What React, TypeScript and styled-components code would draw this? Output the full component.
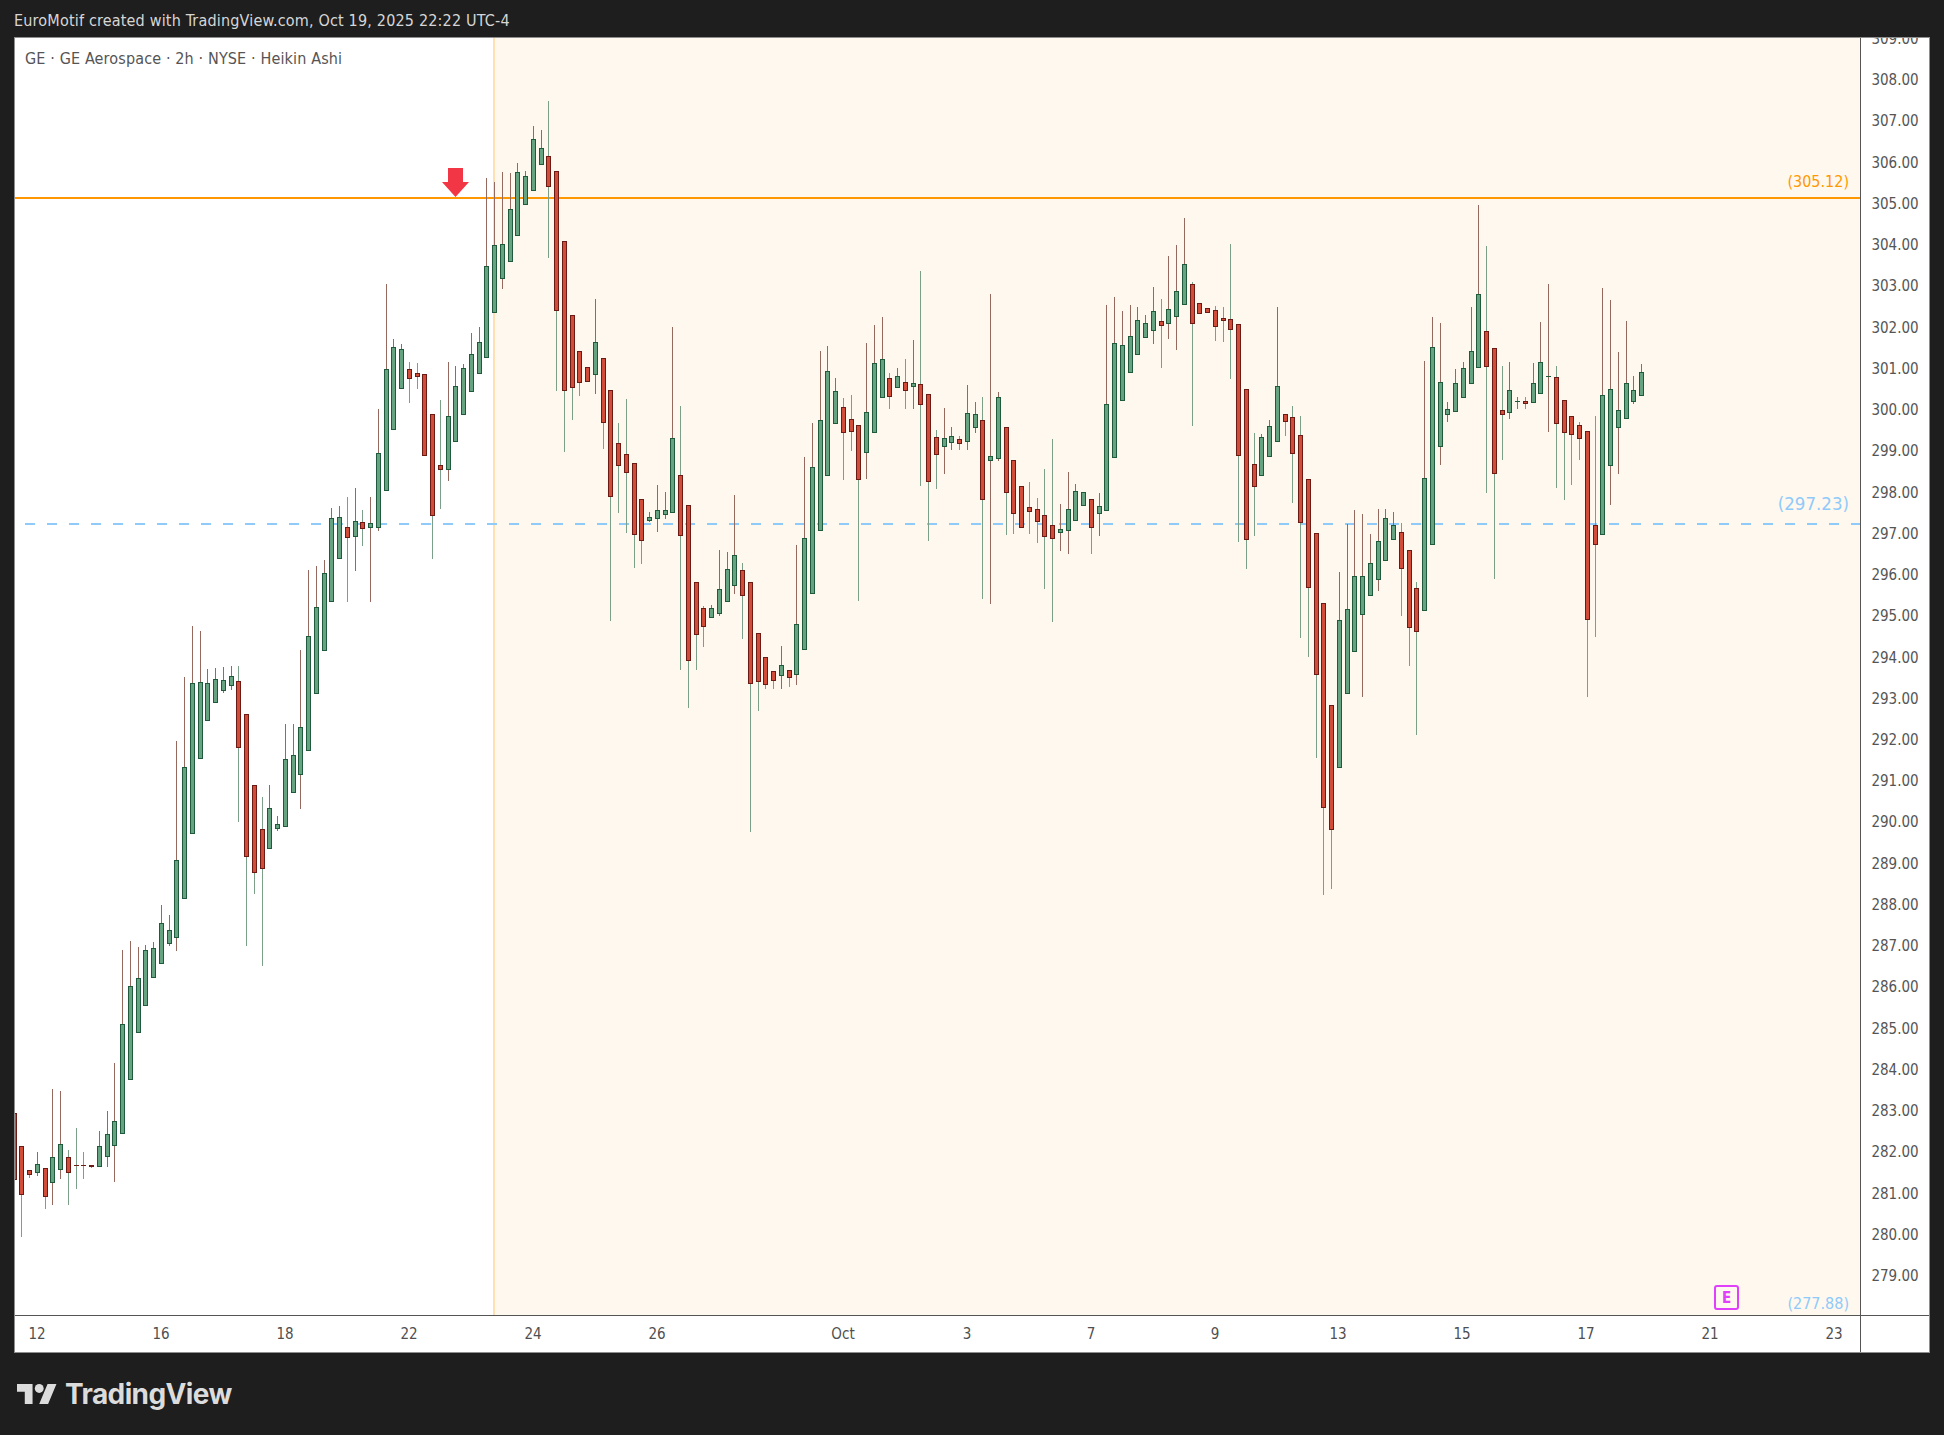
import styled, { createGlobalStyle } from "styled-components";

const GlobalStyle = createGlobalStyle`
  html, body {
    margin: 0;
    padding: 0;
    background: #1e1e1e;
  }
`;

const Page = styled.div`
  width: 1944px;
  height: 1435px;
  overflow: hidden;
  background: #1e1e1e;
  font-family: "DejaVu Sans Condensed", "DejaVu Sans", "Noto Sans", sans-serif;
  font-stretch: condensed;
`;

const Header = styled.div`
  height: 34px;
  padding: 3px 0 0 14px;
  display: flex;
  align-items: center;
  color: #d6d6d6;
  font-size: 16px;
  letter-spacing: 0.18px;
  white-space: nowrap;
`;

const Frame = styled.div`
  margin-left: 14px;
  width: 1916px;
  height: 1316px;
  box-sizing: border-box;
  border: 1px solid #8e8e8e;
  background: #fff;
  display: grid;
  grid-template-columns: 1845px 69px;
  grid-template-rows: 1277px 37px;
`;

const Plot = styled.div`
  position: relative;
  overflow: hidden;
`;

const ChartSvg = styled.svg`
  display: block;
`;

const Legend = styled.div`
  position: absolute;
  left: 10px;
  top: 11px;
  color: #555;
  font-size: 16px;
  letter-spacing: 0.14px;
  line-height: 20px;
  white-space: nowrap;
`;

const LevelLabel = styled.div<{ $color: string; $top: number; $size: number }>`
  position: absolute;
  right: 11px;
  top: ${(p) => p.$top}px;
  color: ${(p) => p.$color};
  font-size: ${(p) => p.$size}px;
  line-height: 20px;
  white-space: nowrap;
`;

const EarningsBadge = styled.div`
  position: absolute;
  left: 1699px;
  top: 1247px;
  width: 25px;
  height: 25px;
  box-sizing: border-box;
  border: 2px solid #e040fb;
  border-radius: 3px;
  color: #e040fb;
  font-size: 15px;
  font-weight: 700;
  display: flex;
  align-items: center;
  justify-content: center;
`;

const PriceAxis = styled.div`
  border-left: 1px solid #555;
  overflow: hidden;
  color: #555;
  font-size: 15px;
`;

const PriceList = styled.div`
  margin-top: -19px;
  display: flex;
  flex-direction: column;
  align-items: center;
`;

const PriceTick = styled.div`
  height: 41.24px;
  line-height: 41.24px;
`;

const TimeAxis = styled.div`
  border-top: 1px solid #555;
  display: flex;
  align-items: center;
  padding-left: 22px;
  color: #4f4f4f;
  font-size: 15px;
`;

const TimeTick = styled.div<{ $width: number }>`
  flex: none;
  width: ${(p) => p.$width}px;
`;

const TimeLabel = styled.span`
  display: inline-block;
  white-space: nowrap;
  transform: translateX(-50%);
`;

const Corner = styled.div`
  border-top: 1px solid #555;
  border-left: 1px solid #555;
`;

const Footer = styled.div`
  padding: 29px 0 0 17px;
  display: flex;
  align-items: center;
  gap: 8px;
  color: #dcdcdc;
`;

const LogoMark = styled.svg`
  display: block;
  flex: none;
`;

const LogoWord = styled.div`
  font-family: Inter, "Liberation Sans", sans-serif;
  font-stretch: normal;
  font-size: 28px;
  font-weight: 700;
  line-height: 24px;
  letter-spacing: -0.6px;
`;

// [green, wick top, body top, body bottom, wick bottom], page pixels
type Candle = [number, number, number, number, number];

const candles: Candle[] = [
  [0,1113,1113,1179,1250],[0,1146,1146,1194,1236],[0,1170,1170,1174,1177],[1,1152,1164,1172,1175],
  [0,1168,1168,1196,1208],[1,1089,1157,1182,1204],[1,1091,1144,1169,1178],[0,1150,1157,1172,1204],
  [0,1128,1165,1165,1188],[0,1152,1165,1165,1178],[0,1165,1165,1166,1167],[1,1131,1146,1166,1166],
  [1,1111,1134,1156,1166],[1,1063,1121,1145,1181],[1,950,1024,1133,1133],[1,941,986,1079,1079],
  [1,947,978,1032,1032],[1,945,950,1005,1005],[1,942,948,977,977],[1,905,923,963,963],
  [1,915,930,943,945],[1,741,860,937,950],[1,677,767,898,898],[1,626,683,833,833],
  [1,631,682,758,758],[1,669,683,720,720],[1,668,679,702,702],[1,667,680,690,692],
  [1,666,676,685,689],[0,666,681,747,821],[0,714,714,856,945],[0,785,785,872,893],
  [0,797,829,868,965],[1,785,808,848,848],[1,816,824,828,830],[1,724,759,826,826],
  [1,724,755,792,792],[1,650,727,774,808],[1,570,636,750,750],[1,566,607,693,693],
  [1,560,573,650,650],[1,508,518,601,601],[1,506,517,558,558],[0,497,527,537,601],
  [1,488,521,536,570],[0,510,522,528,545],[1,497,523,527,601],[1,409,453,527,530],
  [1,284,369,490,490],[1,339,347,429,429],[1,344,349,388,388],[0,362,369,378,402],
  [0,363,373,376,388],[0,374,374,455,455],[0,414,414,515,558],[0,400,465,469,508],
  [1,362,416,469,480],[1,366,386,441,441],[1,364,368,414,414],[1,333,354,391,391],
  [1,327,342,373,373],[1,178,266,357,357],[1,182,245,312,312],[1,172,244,278,288],
  [1,173,209,261,261],[1,163,172,235,235],[1,171,176,204,204],[1,126,139,190,190],
  [1,130,148,164,164],[0,101,156,186,257],[0,171,171,310,390],[0,241,241,390,451],
  [0,315,315,387,419],[0,351,351,382,395],[0,367,367,381,381],[1,299,342,374,393],
  [0,358,358,422,448],[0,390,390,496,620],[0,423,443,465,512],[0,399,454,472,532],
  [0,463,463,534,567],[0,499,499,540,563],[1,512,517,520,521],[1,485,510,518,531],
  [1,492,510,514,518],[1,327,438,512,512],[0,406,475,535,669],[0,505,505,660,707],
  [0,582,582,634,669],[0,606,608,626,646],[1,605,608,617,617],[1,550,589,613,615],
  [1,552,569,601,601],[1,495,555,585,593],[0,563,570,595,638],[0,582,582,683,831],
  [0,633,633,681,710],[0,657,657,684,688],[0,671,671,680,688],[1,646,665,675,688],
  [0,670,670,677,686],[1,545,624,674,684],[1,457,538,649,649],[1,423,467,593,593],
  [1,351,420,530,530],[1,346,371,475,475],[1,378,391,423,423],[0,398,407,432,479],
  [0,395,419,431,450],[0,425,425,479,600],[1,343,412,452,478],[1,325,363,432,432],
  [1,317,359,397,397],[0,373,378,396,408],[1,368,376,387,387],[0,359,382,390,408],
  [1,340,383,386,408],[0,271,384,404,485],[0,394,394,481,540],[0,430,437,454,488],
  [1,408,438,446,473],[1,427,436,442,449],[0,436,439,443,449],[1,385,413,441,449],
  [1,402,414,427,432],[0,397,420,499,598],[1,294,456,460,603],[1,392,397,458,460],
  [0,427,427,492,534],[0,460,460,513,533],[0,486,486,527,527],[0,482,507,511,533],
  [0,498,509,521,542],[0,469,515,536,588],[0,439,525,538,621],[1,504,529,532,550],
  [1,472,509,530,553],[1,484,491,520,520],[1,492,492,505,505],[0,499,499,527,553],
  [1,493,506,513,535],[1,305,404,510,510],[1,297,343,457,457],[1,311,345,400,400],
  [1,305,336,372,372],[1,307,320,354,354],[1,315,323,337,337],[1,287,311,330,343],
  [0,299,321,325,367],[1,256,309,323,338],[1,245,291,316,349],[1,218,264,304,304],
  [0,282,284,323,425],[0,303,303,313,313],[0,308,308,312,312],[0,306,310,326,340],
  [0,307,318,320,341],[0,244,319,329,378],[0,324,324,455,541],[0,389,389,539,568],
  [0,433,464,486,535],[1,434,437,475,475],[1,420,426,456,456],[1,307,386,441,441],
  [0,414,414,421,435],[0,406,417,453,502],[0,416,435,522,637],[0,479,479,587,656],
  [0,533,533,674,757],[0,603,603,807,894],[0,705,705,829,888],[1,572,620,767,767],
  [1,524,609,693,693],[1,510,576,651,651],[1,514,576,614,696],[1,534,563,595,595],
  [1,509,541,579,590],[1,509,518,560,560],[1,512,525,539,539],[0,523,532,568,615],
  [0,550,550,627,665],[0,582,588,631,734],[1,361,478,610,610],[1,317,347,544,544],
  [1,323,382,446,464],[1,402,409,414,421],[1,369,383,411,411],[1,362,368,397,397],
  [1,307,351,383,383],[1,205,294,367,367],[0,246,331,366,492],[0,348,348,473,578],
  [0,366,410,414,459],[1,362,390,412,418],[1,397,401,401,408],[0,397,401,403,408],
  [1,363,383,402,402],[1,322,362,393,393],[1,284,376,376,431],[0,366,377,423,487],
  [0,400,400,432,499],[0,416,416,434,484],[0,422,425,438,459],[0,431,431,619,696],
  [0,416,525,544,636],[1,288,395,534,534],[1,300,389,465,504],[1,352,410,427,473],
  [1,321,383,418,418],[1,376,390,401,403],[1,364,372,395,395],
];

const priceTicks = Array.from({ length: 31 }, (_, i) => (309 - i).toFixed(2));

const timeTicks: [string, number][] = [
  ["12", 124], ["16", 124], ["18", 124], ["22", 124], ["24", 124], ["26", 186],
  ["Oct", 124], ["3", 124], ["7", 124], ["9", 123], ["13", 124], ["15", 124],
  ["17", 124], ["21", 124], ["23", 60],
];

function CandleMark({ c, i }: { c: Candle; i: number }) {
  const [green, wt, bt, bb, wb] = c;
  const x = Math.floor(14 + 7.75 * i);
  const h = bb - bt + 1;
  return (
    <g>
      <rect x={x} y={wt} width={1} height={wb - wt + 1} fill={green ? "#96695f" : "#7b9f89"} />
      <rect x={x - 2} y={bt} width={5} height={h} fill={green ? "#1f5a3d" : "#6b1a14"} />
      {h > 2 && <rect x={x - 1} y={bt + 1} width={3} height={h - 2} fill={green ? "#66a381" : "#d24c3a"} />}
    </g>
  );
}

export default function App() {
  return (
    <Page>
      <GlobalStyle />
      <Header>EuroMotif created with TradingView.com, Oct 19, 2025 22:22 UTC-4</Header>
      <Frame>
        <Plot>
          <ChartSvg width={1845} height={1277} viewBox="15 38 1845 1277" shapeRendering="crispEdges">
            <rect x={494} y={38} width={1366} height={1277} fill="#fff8ef" />
            <rect x={493} y={38} width={2} height={1277} fill="#ffe0b2" />
            <rect x={15} y={197} width={1845} height={2} fill="#ff9800" />
            <line x1={25} y1={524} x2={1860} y2={524} stroke="#90caf9" strokeWidth={2} strokeDasharray="10 12" />
            {candles.map((c, i) => (
              <CandleMark key={i} c={c} i={i} />
            ))}
            <polygon
              points="448,168 463,168 463,182 469,182 455.5,197 442,182 448,182"
              fill="#f23645"
              shapeRendering="auto"
            />
          </ChartSvg>
          <Legend>GE · GE Aerospace · 2h · NYSE · Heikin Ashi</Legend>
          <LevelLabel $color="#ff9800" $top={134} $size={16}>(305.12)</LevelLabel>
          <LevelLabel $color="#90caf9" $top={456} $size={18.5}>(297.23)</LevelLabel>
          <LevelLabel $color="#90caf9" $top={1256} $size={16}>(277.88)</LevelLabel>
          <EarningsBadge>E</EarningsBadge>
        </Plot>
        <PriceAxis>
          <PriceList>
            {priceTicks.map((t) => (
              <PriceTick key={t}>{t}</PriceTick>
            ))}
          </PriceList>
        </PriceAxis>
        <TimeAxis>
          {timeTicks.map(([label, width]) => (
            <TimeTick key={label} $width={width}>
              <TimeLabel>{label}</TimeLabel>
            </TimeTick>
          ))}
        </TimeAxis>
        <Corner />
      </Frame>
      <Footer>
        <LogoMark width={40} height={20} viewBox="0 4 36 18">
          <path d="M14 22H7V11H0V4h14v18zM28 22h-8l7.5-18h8L28 22z" fill="#dcdcdc" />
          <circle cx={20} cy={8} r={4} fill="#dcdcdc" />
        </LogoMark>
        <LogoWord>TradingView</LogoWord>
      </Footer>
    </Page>
  );
}
